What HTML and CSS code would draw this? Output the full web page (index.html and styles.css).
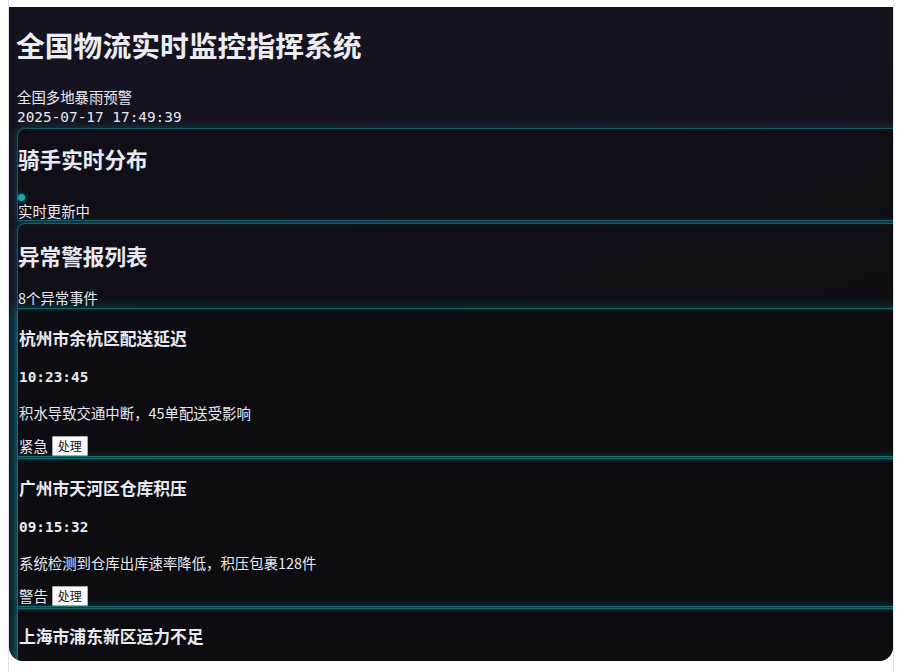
FILE: index.html
```html
<!DOCTYPE html>
<html lang="zh-CN">
<head>
<meta charset="utf-8">
<title>全国物流实时监控指挥系统</title>
<link rel="stylesheet" href="styles.css">
</head>
<body>
<div class="window">
  <div class="panel">
    <header class="header">
      <h1 class="title">全国物流实时监控指挥系统</h1>
      <div class="alert-banner">全国多地暴雨预警</div>
      <div class="clock">2025-07-17 17:49:39</div>
    </header>

    <section class="card">
      <h2 class="card-title">骑手实时分布</h2>
      <div class="live-dot"></div>
      <div class="card-note">实时更新中</div>
    </section>

    <section class="card alerts">
      <div class="alerts-head">
        <h2 class="card-title">异常警报列表</h2>
        <div class="card-note count">8个异常事件</div>
      </div>
      <div class="alert-item first">
        <h3 class="alert-title">杭州市余杭区配送延迟</h3>
        <div class="alert-time">10:23:45</div>
        <div class="alert-desc">积水导致交通中断，45单配送受影响</div>
        <div class="alert-row"><span class="alert-level">紧急</span><button class="handle-btn">处理</button></div>
      </div>
      <div class="alert-item">
        <h3 class="alert-title">广州市天河区仓库积压</h3>
        <div class="alert-time">09:15:32</div>
        <div class="alert-desc">系统检测到仓库出库速率降低，积压包裹128件</div>
        <div class="alert-row"><span class="alert-level">警告</span><button class="handle-btn">处理</button></div>
      </div>
      <div class="alert-item last">
        <h3 class="alert-title">上海市浦东新区运力不足</h3>
      </div>
    </section>
  </div>
</div>
</body>
</html>
```

FILE: styles.css
```css
html, body {
  margin: 0;
  padding: 0;
  background: #ffffff;
}

body {
  font-family: "Noto Sans CJK SC", "Noto Sans", sans-serif;
  color: #e9e9f1;
}

.window {
  margin-left: 8px;
  width: 886px;
  height: 672px;
  border-left: 1px solid #e3e2ee;
  border-right: 1px solid #e3e2ee;
  padding-top: 7px;
  box-sizing: border-box;
  overflow: hidden;
}

.panel {
  height: 654px;
  overflow: hidden;
  border-radius: 0 0 14px 14px;
  background: linear-gradient(160deg, #15131f 0%, #141320 30%, #121219 60%, #111118 100%);
  padding-left: 8px;
  box-sizing: border-box;
}

.header {
  display: flex;
  flex-direction: column;
}

.title {
  margin: 19.5px 0 0 -1px;
  font-size: 28.8px;
  line-height: 35px;
  font-weight: 700;
  color: #ececf3;
}

.alert-banner {
  margin-top: 25px;
  font-size: 14.4px;
  line-height: 20px;
}

.clock {
  font-family: "DejaVu Sans Mono", "Liberation Mono", monospace;
  font-size: 14.4px;
  line-height: 20px;
}

.card {
  margin-top: 1.5px;
  margin-right: -40px;
  border: 1px solid rgba(30, 150, 160, 0.55);
  border-radius: 8px 0 0 0;
  background: rgba(12, 12, 16, 0.45);
  box-shadow: 0 0 10px rgba(0, 200, 215, 0.28);
}

.card-title {
  margin: 16px 0 0;
  font-size: 21.6px;
  line-height: 28px;
  font-weight: 700;
}

.alerts .card-title {
  margin-top: 18px;
}

.live-dot {
  width: 7px;
  height: 7px;
  margin-top: 20.5px;
  border-radius: 50%;
  background: #14a8b0;
  box-shadow: 0 0 4px rgba(20, 200, 210, 0.6);
}

.card-note {
  margin-top: 1.5px;
  font-size: 14.4px;
  line-height: 18px;
}

.alerts {
  border-bottom: none;
}

.alerts-head {
  padding-bottom: 1px;
}

.count {
  margin-top: 19px;
}

.alert-item {
  margin-top: 1px;
  padding-left: 1px;
  border-top: 1px solid #1a6166;
  border-bottom: 1px solid #1a6166;
  background: rgba(10, 10, 14, 0.5);
  box-shadow: -4px 0 10px rgba(0, 190, 205, 0.35), inset 0 3px 2px -2px rgba(30, 130, 140, 0.35);
}

.alert-item.first {
  margin-top: 0;
}

.alert-item.last {
  height: 60px;
  border-bottom: none;
}

.alert-title {
  margin: 17px 0 0;
  font-size: 16.8px;
  line-height: 24px;
  font-weight: 700;
}

.alert-item.last .alert-title {
  margin-top: 15px;
}

.alert-time {
  margin-top: 17px;
  font-family: "DejaVu Sans Mono", "Liberation Mono", monospace;
  font-size: 14.4px;
  line-height: 20px;
  font-weight: 700;
}

.alert-desc {
  margin-top: 16px;
  font-size: 14.4px;
  line-height: 20px;
}

.alert-row {
  margin-top: 13px;
  display: flex;
  align-items: center;
  gap: 4px;
  height: 20px;
}

.alert-level {
  font-size: 14.4px;
  line-height: 20px;
}

.handle-btn {
  height: 20px;
  padding: 0 5px;
  border: 1px solid #a9a9b0;
  border-radius: 1px;
  background: #fbfbfb;
  color: #111;
  font-family: "Noto Sans CJK SC", sans-serif;
  font-size: 12px;
  line-height: 16px;
  cursor: pointer;
}
```
